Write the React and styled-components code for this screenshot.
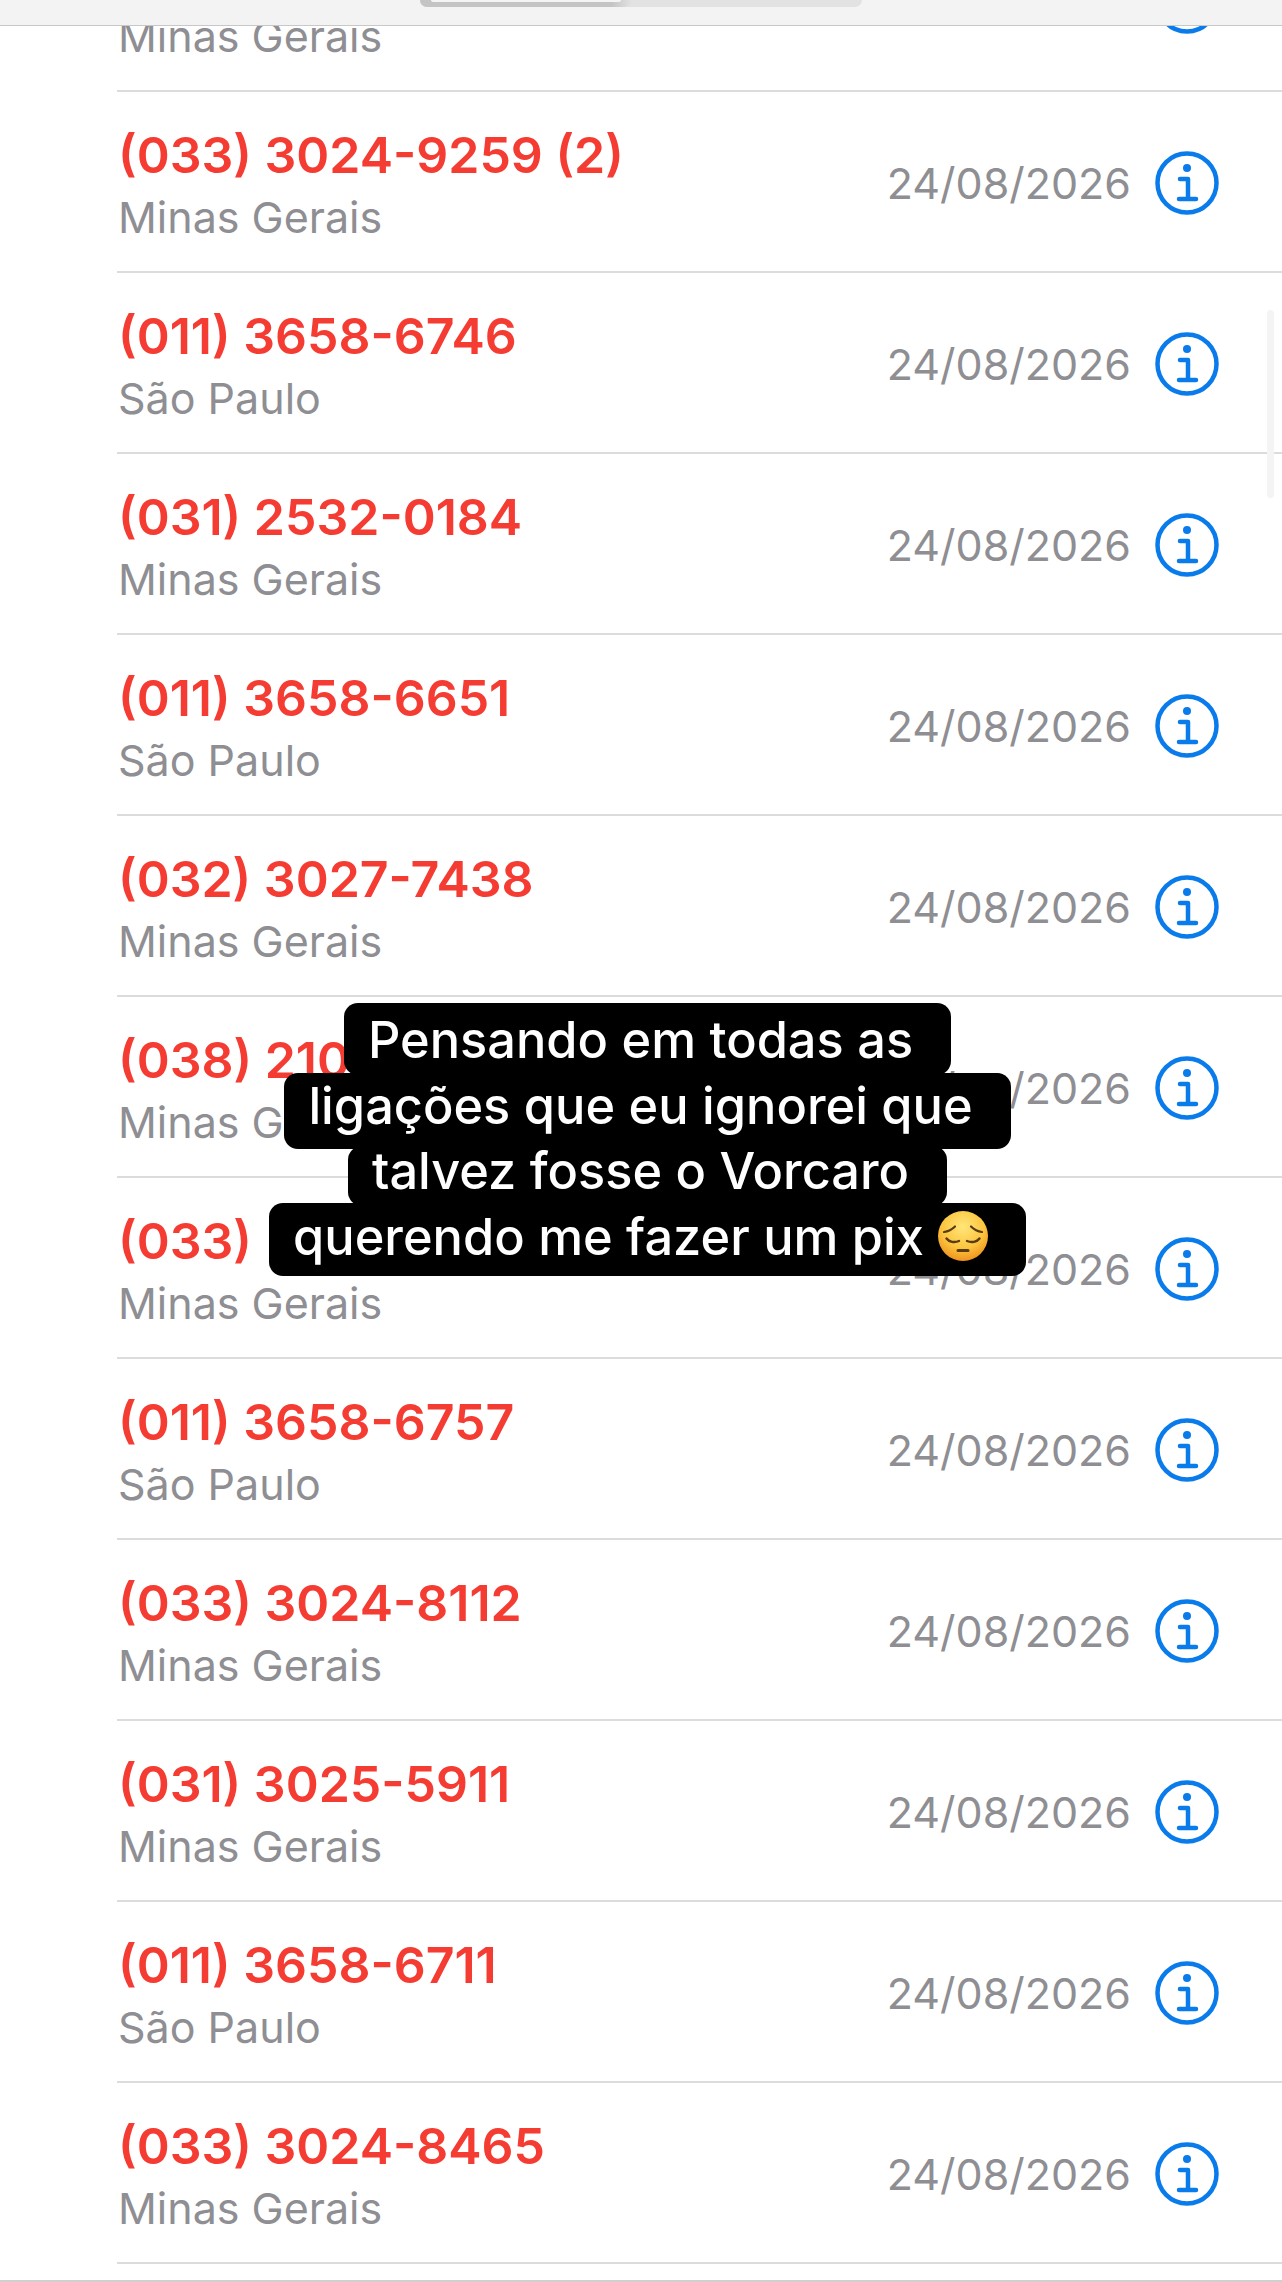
import React from 'react'
import styled, { createGlobalStyle } from 'styled-components'

const GlobalStyle = createGlobalStyle`
  html, body {
    margin: 0;
    padding: 0;
    background: #fff;
  }
  body {
    font-family: Inter, "Liberation Sans", sans-serif;
    -webkit-font-smoothing: antialiased;
  }
`

const Screen = styled.div`
  position: relative;
  width: 1282px;
  height: 2282px;
  overflow: hidden;
  background: #fff;
`

const TopBar = styled.div`
  position: relative;
  z-index: 2;
  height: 25px;
  background: #f3f3f3;
  border-bottom: 1px solid #c8c8c8;
  display: flex;
  justify-content: center;
`

const Segmented = styled.div`
  width: 442px;
  height: 7px;
  background: #e2e2e2;
  border-radius: 0 0 14px 14px;
  display: flex;
`

const SegmentThumb = styled.div`
  width: 212px;
  height: 7px;
  background: linear-gradient(90deg, #c4c4c4 90%, #e2e2e2);
  border-radius: 0 0 14px 14px;
  display: flex;
  justify-content: center;
`

const SegmentLight = styled.div`
  width: 190px;
  height: 2px;
  background: #f4f4f4;
  border-radius: 0 0 4px 4px;
`

const List = styled.div`
  margin-top: -115px;
  padding-left: 117px;
`

const Row = styled.div`
  box-sizing: border-box;
  height: 181px;
  border-bottom: 2px solid #dcdcdc;
  display: flex;
  align-items: center;
  justify-content: space-between;
  padding-right: 63px;
`

const Caller = styled.div`
  display: flex;
  flex-direction: column;
  gap: 9px;
  padding: 6px 0 0 1px;
`

const Phone = styled.div`
  font-size: 50px;
  line-height: 56px;
  font-weight: 600;
  color: #f53c33;
  white-space: nowrap;
`

const Region = styled.div`
  font-size: 43px;
  line-height: 50px;
  color: #8e8e93;
`

const Meta = styled.div`
  display: flex;
  align-items: center;
  gap: 24px;
  padding-top: 2px;
`

const DateText = styled.div`
  font-size: 43px;
  line-height: 50px;
  color: #8e8e93;
`

const ScrollThumb = styled.div`
  position: absolute;
  top: 310px;
  right: 8px;
  width: 7px;
  height: 188px;
  border-radius: 4px;
  background: #f4f4f4;
`

const BottomLine = styled.div`
  position: absolute;
  left: 0;
  right: 0;
  bottom: 0;
  height: 2px;
  background: #cfcfcf;
`

const Caption = styled.div`
  position: absolute;
  top: 1003px;
  left: 268px;
  width: 759px;
  display: flex;
  flex-direction: column;
  align-items: center;
`

const CaptionLine = styled.div`
  box-sizing: border-box;
  display: flex;
  align-items: center;
  justify-content: center;
  gap: 14px;
  height: ${p => p.$height}px;
  padding: 0 38px ${p => p.$lift}px 24px;
  margin-bottom: ${p => p.$overlap}px;
  background: #000;
  border-radius: 14px;
  color: #fff;
  font-size: 50.500px;
  font-weight: 500;
  white-space: nowrap;
`

const InfoIcon = () => (
  <svg width="64" height="64" viewBox="0 0 64 64" fill="none">
    <circle cx="32" cy="32" r="29.5" stroke="#0a7bea" strokeWidth="4.5" />
    <circle cx="32" cy="17" r="4" fill="#0a7bea" />
    <path
      d="M25 28h8v20M24 48h17"
      stroke="#0a7bea"
      strokeWidth="4.5"
      strokeLinecap="round"
      strokeLinejoin="round"
    />
  </svg>
)

const PensiveEmoji = () => (
  <svg width="50" height="50" viewBox="0 0 50 50">
    <defs>
      <radialGradient id="face" cx="50%" cy="32%" r="70%">
        <stop offset="0%" stopColor="#ffe67a" />
        <stop offset="60%" stopColor="#fcc53f" />
        <stop offset="100%" stopColor="#ee8f1c" />
      </radialGradient>
    </defs>
    <circle cx="25" cy="25" r="25" fill="url(#face)" />
    <g fill="none" stroke="#5a3a12" strokeLinecap="round">
      <path d="M6 21c4-.5 8-2.500 11-5.500M44 21c-4-.5-8-2.500-11-5.500" strokeWidth="2.200" />
      <path d="M8.500 27.500c2.500 3.500 8 4.500 12.500 2.500M41.500 27.500c-2.500 3.500-8 4.500-12.500 2.500" strokeWidth="2.400" />
      <path d="M20 39.500h10" strokeWidth="3" />
    </g>
  </svg>
)

// rows 6 and 7 run under the caption, only the visible part of the number is known
const calls = [
  { phone: '', region: 'Minas Gerais' },
  { phone: '(033) 3024-9259 (2)', region: 'Minas Gerais' },
  { phone: '(011) 3658-6746', region: 'São Paulo' },
  { phone: '(031) 2532-0184', region: 'Minas Gerais' },
  { phone: '(011) 3658-6651', region: 'São Paulo' },
  { phone: '(032) 3027-7438', region: 'Minas Gerais' },
  { phone: '(038) 210', region: 'Minas Gerais' },
  { phone: '(033)', region: 'Minas Gerais' },
  { phone: '(011) 3658-6757', region: 'São Paulo' },
  { phone: '(033) 3024-8112', region: 'Minas Gerais' },
  { phone: '(031) 3025-5911', region: 'Minas Gerais' },
  { phone: '(011) 3658-6711', region: 'São Paulo' },
  { phone: '(033) 3024-8465', region: 'Minas Gerais' },
]

export default function App() {
  return (
    <Screen>
      <GlobalStyle />
      <TopBar>
        <Segmented>
          <SegmentThumb>
            <SegmentLight />
          </SegmentThumb>
        </Segmented>
      </TopBar>
      <List>
        {calls.map((call, i) => (
          <Row key={i}>
            <Caller>
              <Phone>{call.phone || '\u00a0'}</Phone>
              <Region>{call.region}</Region>
            </Caller>
            <Meta>
              <DateText>24/08/2026</DateText>
              <InfoIcon />
            </Meta>
          </Row>
        ))}
      </List>
      <ScrollThumb />
      <BottomLine />
      <Caption>
        <CaptionLine $height={72} $lift={0} $overlap={-2}>Pensando em todas as</CaptionLine>
        <CaptionLine $height={76} $lift={12} $overlap={-3}>ligações que eu ignorei que</CaptionLine>
        <CaptionLine $height={60} $lift={11} $overlap={-3}>talvez fosse o Vorcaro</CaptionLine>
        <CaptionLine $height={73} $lift={7} $overlap={0}>
          querendo me fazer um pix
          <PensiveEmoji />
        </CaptionLine>
      </Caption>
    </Screen>
  )
}
